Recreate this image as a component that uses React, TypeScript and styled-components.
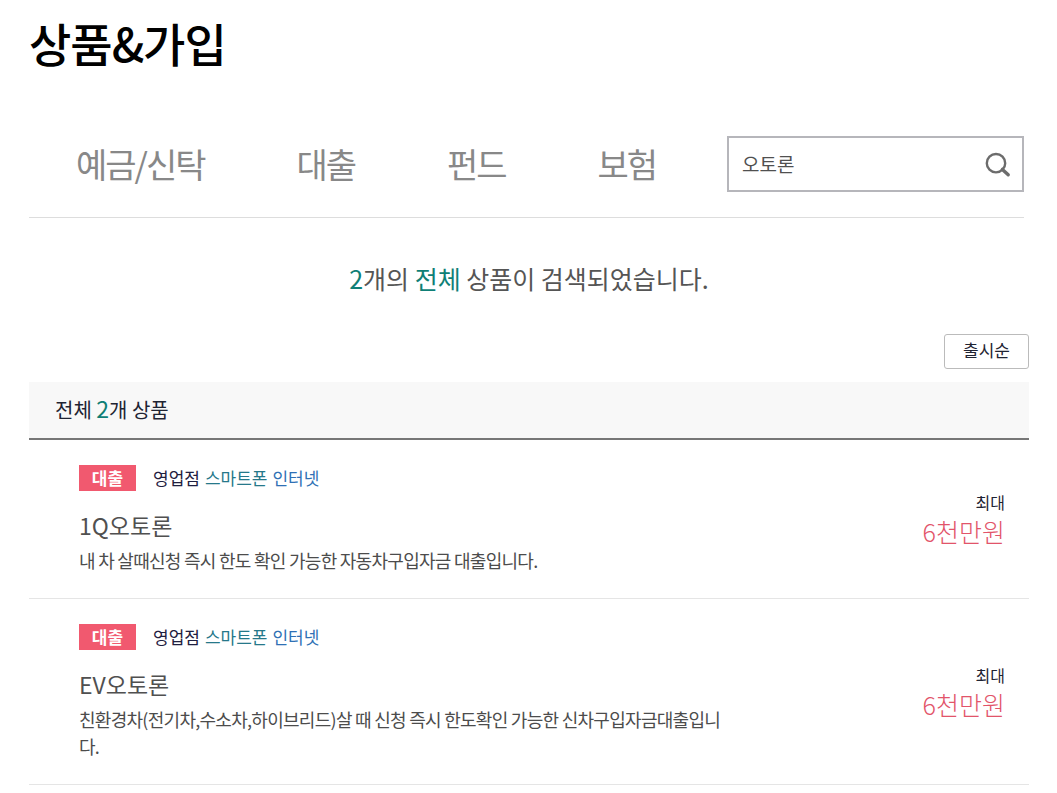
import React from 'react';
import styled, { createGlobalStyle } from 'styled-components';

const Global = createGlobalStyle`
  * { box-sizing: border-box; }
  body { margin: 0; background: #fff; color: #333; font-family: "Noto Sans CJK KR", "Noto Sans", sans-serif; }
  h1, h2, h3, p, ul { margin: 0; padding: 0; font-weight: 400; }
  ul { list-style: none; }
  a { text-decoration: none; color: inherit; }
  button, input { font: inherit; }
`;

const Page = styled.main`
  padding: 8px 28px 0 29px;
`;
const Title = styled.h1`
  font-size: 46px;
  line-height: 68px;
  font-weight: 500;
  color: #000;
  letter-spacing: -1px;
`;
const Toolbar = styled.div`
  display: flex;
  align-items: center;
  justify-content: space-between;
  margin: 60px 5px 0 0;
  padding-bottom: 25px;
  border-bottom: 1px solid #ddd;
`;
const Nav = styled.nav`
  display: flex;
  gap: 92px;
  padding-left: 47px;
`;
const NavLink = styled.a`
  font-size: 34px;
  line-height: 56px;
  letter-spacing: -2px;
  white-space: nowrap;
  && { color: #888; }
`;
const Search = styled.form`
  display: flex;
  align-items: center;
  width: 297px;
  height: 56px;
  border: 2px solid #b6b6bb;
  padding: 0 10px 0 13px;
`;
const SearchInput = styled.input`
  flex: 1;
  min-width: 0;
  border: 0;
  padding: 0;
  outline: 0;
  font-size: 19px;
  line-height: 28px;
  color: #505050;
  background: transparent;
`;
const SearchButton = styled.button`
  display: flex;
  border: 0;
  padding: 0;
  background: none;
`;
const Summary = styled.p`
  margin-top: 38px;
  text-align: center;
  font-size: 25px;
  line-height: 44px;
  color: #555;
`;
const Accent = styled.span`
  color: #0f7f76;
`;
const Sort = styled.div`
  display: flex;
  justify-content: flex-end;
  margin: 34px 0 13px;
`;
const SortButton = styled.button`
  width: 85px;
  height: 35px;
  border: 1px solid #bbb;
  border-radius: 3px;
  background: #fff;
  padding: 0 0 4px;
  font-size: 17px;
  line-height: 28px;
  color: #1f2433;
`;
const ListHead = styled.h2`
  padding-left: 26px;
  background: #f8f8f8;
  border-bottom: 2px solid #777;
  font-size: 20px;
  line-height: 56px;
  color: #1f2433;
`;
const Count = styled(Accent)`
  font-size: 23px;
  line-height: 1;
`;
const Item = styled.li`
  display: flex;
  align-items: center;
  justify-content: space-between;
  padding: 24px 24px 24px 50px;
  border-bottom: 1px solid #e5e5e5;
`;
const Info = styled.div`
  width: 650px;
`;
const Meta = styled.div`
  display: flex;
  align-items: center;
  gap: 5px;
  font-size: 17px;
  line-height: 28px;
  color: #1f2040;
`;
const Badge = styled.span`
  width: 57px;
  margin-right: 12px;
  background: #f1596f;
  color: #fff;
  font-weight: 700;
  line-height: 26px;
  text-align: center;
`;
const Channel = styled.span<{ $color: string }>`
  color: ${p => p.$color};
`;
const Name = styled.h3`
  margin-top: 17px;
  font-size: 23px;
  line-height: 32px;
  color: #505050;
`;
const Desc = styled.p`
  margin-top: 6px;
  font-size: 18px;
  line-height: 27px;
  letter-spacing: -0.04em;
  color: #4c4c4c;
`;
const Limit = styled.div`
  text-align: right;
`;
const LimitLabel = styled.p`
  font-size: 16px;
  line-height: 24px;
  color: #1f2433;
`;
const Amount = styled.p`
  font-size: 25px;
  line-height: 34px;
  font-weight: 300;
  color: #e2546a;
`;

const categories = ['예금/신탁', '대출', '펀드', '보험'];
const products = [
  { name: '1Q오토론', desc: '내 차 살때신청 즉시 한도 확인 가능한 자동차구입자금 대출입니다.' },
  { name: 'EV오토론', desc: '친환경차(전기차,수소차,하이브리드)살 때 신청 즉시 한도확인 가능한 신차구입자금대출입니다.' },
];

export default function App() {
  return (
    <Page>
      <Global />
      <Title>상품&amp;가입</Title>
      <Toolbar>
        <Nav>{categories.map(c => <NavLink href="#" key={c}>{c}</NavLink>)}</Nav>
        <Search onSubmit={e => e.preventDefault()}>
          <SearchInput aria-label="상품 검색" defaultValue="오토론" />
          <SearchButton type="submit" aria-label="검색">
            <svg width="28" height="28" viewBox="0 0 28 28" fill="none" stroke="#6c6c6c">
              <circle cx="12" cy="13.2" r="9.2" strokeWidth="2.4" />
              <path d="M18.4 19.4l5.8 5.4" strokeWidth="3.4" strokeLinecap="round" />
            </svg>
          </SearchButton>
        </Search>
      </Toolbar>
      <Summary><Accent>2</Accent>개의 <Accent>전체</Accent> 상품이 검색되었습니다.</Summary>
      <Sort><SortButton type="button">출시순</SortButton></Sort>
      <ListHead>전체 <Count>2</Count>개 상품</ListHead>
      <ul>
        {products.map(p => (
          <Item key={p.name}>
            <Info>
              <Meta>
                <Badge>대출</Badge>
                <span>영업점</span>
                <Channel $color="#26788a">스마트폰</Channel>
                <Channel $color="#2f70b5">인터넷</Channel>
              </Meta>
              <Name>{p.name}</Name>
              <Desc>{p.desc}</Desc>
            </Info>
            <Limit>
              <LimitLabel>최대</LimitLabel>
              <Amount>6천만원</Amount>
            </Limit>
          </Item>
        ))}
      </ul>
    </Page>
  );
}
